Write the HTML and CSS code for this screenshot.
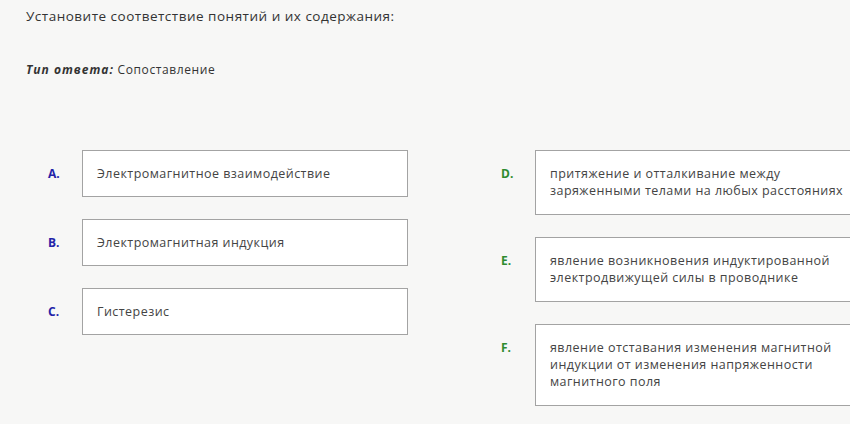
FILE: index.html
```html
<!DOCTYPE html>
<html lang="ru">
<head>
    <meta charset="UTF-8">
    <meta name="viewport" content="width=device-width, initial-scale=1.0">
    <title>Сопоставление</title>
    <link rel="stylesheet" href="styles.css">
</head>
<body>
<div class="question">
    <p class="question-text">Установите соответствие понятий и их содержания:</p>
    <p class="answer-type"><em>Тип ответа:</em> Сопоставление</p>

    <div class="matching">
        <div class="column">
            <div class="item">
                <span class="letter letter-left">A.</span>
                <div class="box">Электромагнитное взаимодействие</div>
            </div>
            <div class="item">
                <span class="letter letter-left">B.</span>
                <div class="box">Электромагнитная индукция</div>
            </div>
            <div class="item">
                <span class="letter letter-left">C.</span>
                <div class="box">Гистерезис</div>
            </div>
        </div>
        <div class="column column-right">
            <div class="item">
                <span class="letter letter-right">D.</span>
                <div class="box">притяжение и отталкивание между<br>заряженными телами на любых расстояниях</div>
            </div>
            <div class="item">
                <span class="letter letter-right">E.</span>
                <div class="box">явление возникновения индуктированной<br>электродвижущей силы в проводнике</div>
            </div>
            <div class="item">
                <span class="letter letter-right">F.</span>
                <div class="box">явление отставания изменения магнитной<br>индукции от изменения напряженности<br>магнитного поля</div>
            </div>
        </div>
    </div>
</div>
</body>
</html>
```

FILE: styles.css
```css
body {
    margin: 0;
    background-color: #f7f7f6;
    font-family: "Open Sans", Arial, sans-serif;
    color: #333;
    overflow: hidden;
}

.question {
    padding: 6px 0 0 26px;
}

.question-text {
    margin: 0;
    font-size: 13.5px;
    letter-spacing: 0.5px;
    line-height: 20px;
}

.answer-type {
    margin: 36px 0 0;
    font-size: 12px;
    letter-spacing: 0.6px;
    line-height: 16px;
}

.answer-type em {
    font-weight: bold;
    letter-spacing: 1px;
}

.matching {
    display: flex;
    gap: 93px;
    margin: 72px 0 0 22px;
    width: 900px;
}

.column {
    display: flex;
    flex-direction: column;
    gap: 22px;
    width: 360px;
    flex-shrink: 0;
}

.column-right .box {
    padding-bottom: 15px;
}

.item {
    display: flex;
}

.letter {
    width: 34px;
    flex-shrink: 0;
    padding-top: 16px;
    font-size: 12px;
    line-height: 16px;
    font-weight: bold;
}

.letter-left {
    color: #2323a8;
}

.letter-right {
    color: #2e8b2e;
}

.box {
    flex: 1;
    background-color: #fff;
    border: 1px solid #a3a3a3;
    padding: 14px;
    font-size: 12.5px;
    letter-spacing: 0.45px;
    line-height: 17px;
    color: #444;
}
```
